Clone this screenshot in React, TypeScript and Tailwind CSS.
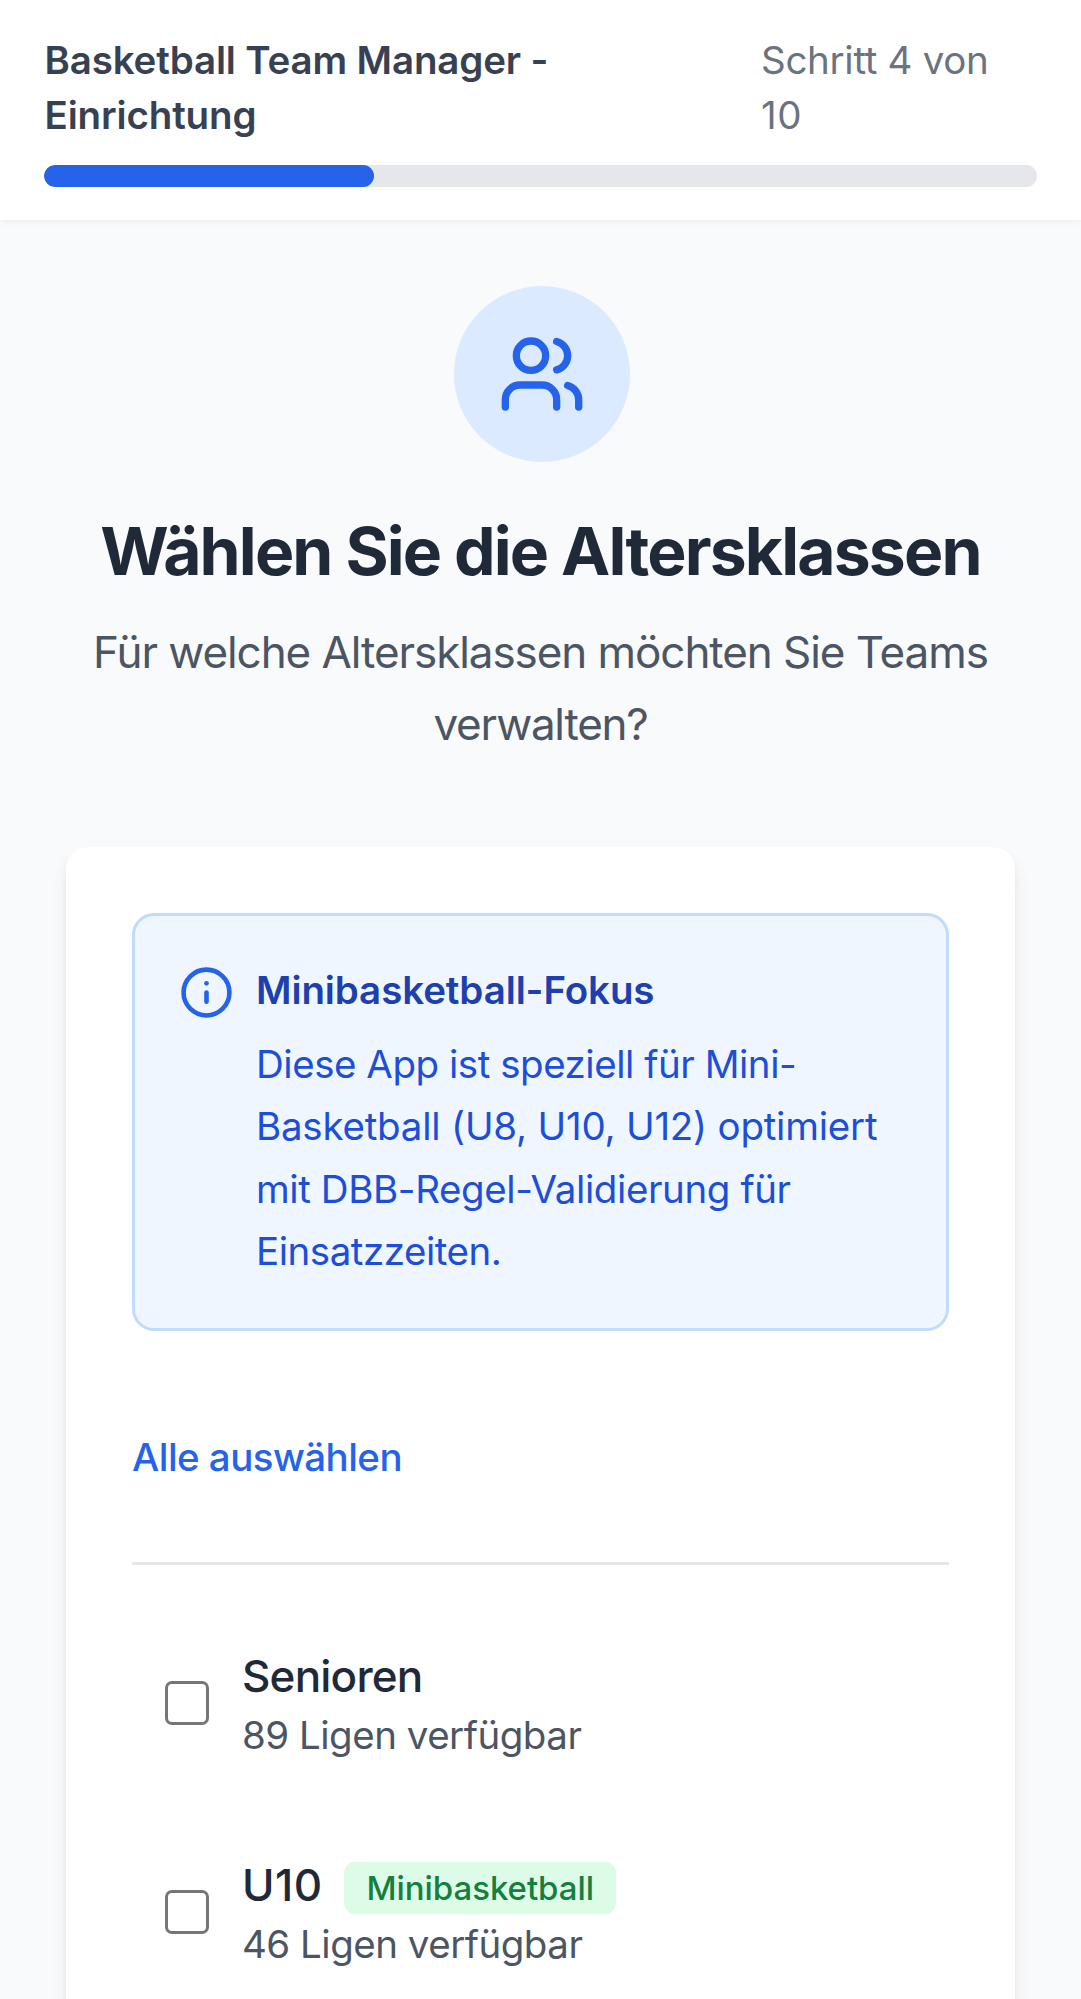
import React from "react";
import { Info, Users } from "lucide-react";

type AgeGroup = { name: string; leagues: number; mini?: boolean };

const groups: AgeGroup[] = [
  { name: "Senioren", leagues: 89 },
  { name: "U10", leagues: 46, mini: true },
];

function Header({ step, total }: { step: number; total: number }) {
  return (
    <header className="bg-white px-[44px] py-[33px] shadow-[0_2.75px_5.5px_0_rgba(0,0,0,0.05)]">
      <div className="mb-[22px] flex items-start justify-between text-[38.5px] leading-[55px]">
        <h2 className="w-[560px] pl-[0.5px] font-semibold tracking-[-0.15px] text-[#374151]">
          Basketball Team Manager - Einrichtung
        </h2>
        <span className="w-[276px] tracking-[-0.3px] text-[#6b7280]">
          Schritt {step} von
          <br />
          <span className="tracking-[0.6px]">{total}</span>
        </span>
      </div>
      <div className="h-[22px] overflow-hidden rounded-full bg-[#e5e7eb]">
        <div className="h-full w-[330px] rounded-full bg-[#2563eb]" />
      </div>
    </header>
  );
}

function GroupRow({ group }: { group: AgeGroup }) {
  return (
    <label className="flex items-center gap-[33px] p-[33px]">
      <input
        type="checkbox"
        className="mt-px size-[44px] shrink-0 appearance-none rounded-[7px] border-[3px] border-[#767676] bg-white"
      />
      <div>
        <div className="flex h-[66px] items-center gap-[22px] text-[44px] leading-[68px] font-medium text-[#1f2937]">
          <span className={group.mini ? "mt-[2px] tracking-[0.4px]" : "mt-[2px] tracking-[-0.8px]"}>{group.name}</span>
          {group.mini && (
            <span className="mt-[9px] rounded-[11px] bg-[#dcfce7] px-[22px] py-[4px] text-[33px] leading-[44px] font-medium tracking-[-0.05px] text-[#15803d]">
              Minibasketball
            </span>
          )}
        </div>
        <div className="text-[38.5px] leading-[55px] tracking-[-0.5px] text-[#4b5563]">
          {group.leagues} Ligen verfügbar
        </div>
      </div>
    </label>
  );
}

export default function App() {
  return (
    <div className="h-[1999px] overflow-hidden bg-[#f9fafb] font-['Inter',sans-serif] antialiased">
      <Header step={4} total={10} />
      <main className="px-[66px] pt-[66px]">
        <div className="mb-[87px] text-center">
          <div className="mb-[45px] flex justify-center pl-[2px]">
            <div className="flex size-[176px] items-center justify-center rounded-full bg-[#dbeafe]">
              <Users className="size-[88px] text-[#2563eb]" />
            </div>
          </div>
          <h1 className="mb-[22px] text-[66px] leading-[88px] font-bold tracking-[-1.85px] whitespace-nowrap text-[#1f2937]">
            Wählen Sie die Altersklassen
          </h1>
          <p className="text-[44px] leading-[71.5px] tracking-[-1.07px] text-[#4b5563]">
            Für welche Altersklassen möchten Sie Teams
            <br />
            <span className="tracking-[-1.25px]">verwalten?</span>
          </p>
        </div>

        <section className="h-[1400px] rounded-[22px] bg-white p-[66px] shadow-[0_11px_16.5px_-2.75px_rgba(0,0,0,0.1),0_5.5px_11px_-5.5px_rgba(0,0,0,0.1)]">
          <div className="mb-[66px] flex gap-[22px] rounded-[22px] border-[3px] border-[#bfdbfe] bg-[#eff6ff] px-[44px] pt-[43px] pb-[45px]">
            <Info className="mt-[6px] size-[55px] shrink-0 text-[#2563eb]" />
            <div className="text-[38.5px] leading-[62.56px] text-[#1d4ed8]">
              <p className="mb-[11px] font-semibold tracking-[-0.1px] text-[#1e40af]">Minibasketball-Fokus</p>
              <p className="tracking-[-0.47px] whitespace-nowrap">
                Diese App ist speziell für Mini-
                <br />
                <span className="tracking-[-0.22px]">Basketball (U8, U10, U12) optimiert</span>
                <br />
                <span className="tracking-[-0.4px]">mit DBB-Regel-Validierung für</span>
                <br />
                Einsatzzeiten.
              </p>
            </div>
          </div>

          <div className="mb-[44px] border-b-[3px] border-[#e5e7eb] pb-[44px]">
            <button className="flex h-[121px] items-center text-[38.5px] leading-[55px] font-medium tracking-[-0.55px] text-[#2563eb]">
              Alle auswählen
            </button>
          </div>

          <div className="flex flex-col gap-[22px]">
            {groups.map((group) => (
              <GroupRow key={group.name} group={group} />
            ))}
          </div>
        </section>
      </main>
    </div>
  );
}
